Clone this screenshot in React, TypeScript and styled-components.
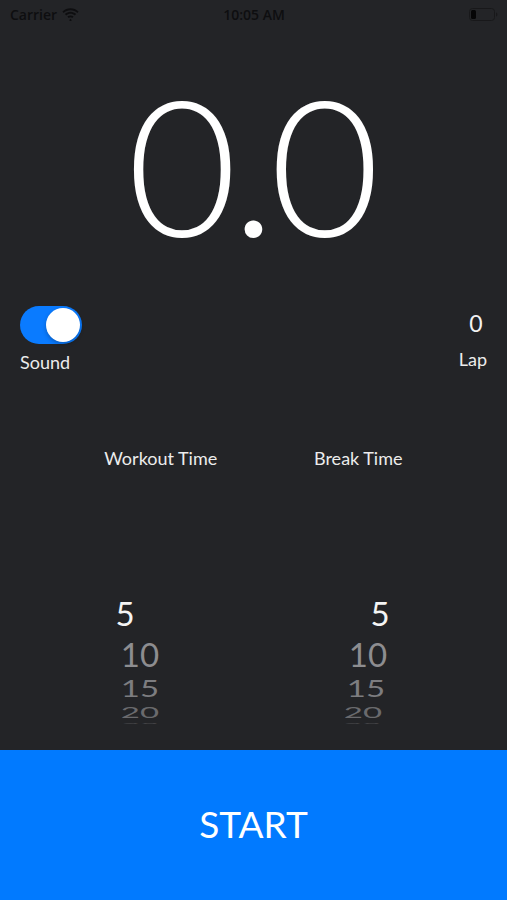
import styled, { createGlobalStyle } from "styled-components";

const GlobalStyle = createGlobalStyle`
  html, body {
    margin: 0;
    padding: 0;
    background: #232427;
  }
  * {
    box-sizing: border-box;
  }
`;

const Screen = styled.div`
  width: 507px;
  height: 900px;
  display: flex;
  flex-direction: column;
  background: #232427;
  font-family: Lato, "Open Sans", sans-serif;
  color: #fff;
  overflow: hidden;
`;

const StatusBar = styled.div`
  height: 28px;
  display: grid;
  grid-template-columns: 1fr auto 1fr;
  align-items: center;
  padding: 0 9px 0 10px;
  color: #0e0e10;
  font-family: "Open Sans", sans-serif;
  font-size: 14px;
  font-weight: 600;
`;

const StatusLeft = styled.div`
  display: flex;
  align-items: center;
  gap: 5px;
`;

const StatusRight = styled.div`
  display: flex;
  justify-content: flex-end;
  align-items: center;
`;

const Timer = styled.div`
  height: 262px;
  padding: 8px 6px 0 0;
  display: flex;
  justify-content: center;
  align-items: center;
  font-size: 190px;
  font-weight: 300;
  line-height: 1;
  letter-spacing: -6px;
`;

const ControlsRow = styled.div`
  height: 140px;
  display: flex;
  justify-content: space-between;
  align-items: flex-start;
  padding: 16px 20px 0 20px;
`;

const Control = styled.div<{ $align: "start" | "end" }>`
  display: flex;
  flex-direction: column;
  align-items: ${(p) => (p.$align === "start" ? "flex-start" : "center")};
  gap: ${(p) => (p.$align === "start" ? "7px" : "12px")};
`;

const Switch = styled.div<{ $on: boolean }>`
  width: 62px;
  height: 38px;
  border-radius: 19px;
  padding: 2px;
  display: flex;
  justify-content: ${(p) => (p.$on ? "flex-end" : "flex-start")};
  background: ${(p) => (p.$on ? "#0a7bff" : "#3a3a3c")};
`;

const Knob = styled.div`
  width: 34px;
  height: 34px;
  border-radius: 50%;
  background: #fff;
  box-shadow: 0 2px 4px rgba(0, 0, 0, 0.25);
`;

const SmallLabel = styled.div`
  font-size: 18px;
  color: #ececec;
  line-height: 22px;
`;

const LapCount = styled.div`
  font-size: 23px;
  line-height: 26px;
  color: #f2f2f2;
  padding-top: 4px;
  padding-left: 6px;
`;

const Columns = styled.div`
  display: grid;
  grid-template-columns: 1fr 1fr;
  padding: 0 50px 0 62px;
`;

const ColumnTitle = styled.div`
  text-align: center;
  font-size: 18px;
  color: #ececec;
  line-height: 24px;
  padding-top: 16px;
`;

const Pickers = styled(Columns)`
  padding: 0 25px 0 26px;
  margin-top: 122px;
`;

const Wheel = styled.div`
  display: flex;
  flex-direction: column;
  align-items: center;
`;

const WheelItem = styled.div<{
  $h: number;
  $scale: number;
  $shift: number;
  $color: string;
}>`
  height: ${(p) => p.$h}px;
  line-height: ${(p) => p.$h}px;
  font-size: 33px;
  color: ${(p) => p.$color};
  transform: translateX(${(p) => p.$shift}px) scaleY(${(p) => p.$scale});
  overflow: visible;
`;

const StartButton = styled.button`
  margin-top: auto;
  height: 150px;
  width: 100%;
  padding: 0 0 4px 0;
  border: none;
  background: #017aff;
  color: #fff;
  font-family: Lato, "Open Sans", sans-serif;
  font-size: 37px;
  font-weight: 400;
  cursor: pointer;
`;

const rows = [
  { v: "5", h: 42, scale: 1, color: "#f4f4f4" },
  { v: "10", h: 40, scale: 1, color: "#8d8d90" },
  { v: "15", h: 28, scale: 0.7, color: "#7d7d80" },
  { v: "20", h: 20, scale: 0.45, color: "#6a6a6d" },
  { v: "25", h: 2, scale: 0.07, color: "#4a4a4d" },
];

const leftShift = [-15, 0, 0, 0, 0];
const rightShift = [12, 0, -2, -5, -6];

const Wifi = () => (
  <svg width="17" height="13" viewBox="0 0 17 13">
    <path d="M8.5 2.2c2.6 0 5 1 6.8 2.7l1.3-1.4C14.4 1.4 11.6 0.2 8.5 0.2S2.6 1.4 0.4 3.5l1.3 1.4C3.5 3.2 5.9 2.2 8.5 2.2z" fill="#0e0e10" />
    <path d="M8.5 5.8c1.6 0 3.1 0.6 4.3 1.7l1.3-1.4C12.6 4.7 10.6 3.8 8.5 3.8S4.4 4.7 2.9 6.1l1.3 1.4C5.4 6.4 6.9 5.8 8.5 5.8z" fill="#0e0e10" />
    <path d="M8.5 9.3c0.7 0 1.3 0.2 1.8 0.7l1.3-1.4C10.8 7.8 9.7 7.4 8.5 7.4S6.2 7.8 5.4 8.6l1.3 1.4C7.2 9.5 7.8 9.3 8.5 9.3z M8.5 10.8l1.3 1.4-1.3 1.3-1.3-1.3z" fill="#0e0e10" />
  </svg>
);

const Battery = () => (
  <svg width="29" height="13" viewBox="0 0 29 13">
    <rect x="0.5" y="0.5" width="25" height="12" rx="3" fill="none" stroke="#18181a" strokeWidth="1" />
    <rect x="2" y="2" width="5" height="9" rx="1.5" fill="#050506" />
    <path d="M27 4.5v4c0.8-0.3 1.4-1 1.4-2s-0.6-1.7-1.4-2z" fill="#18181a" />
  </svg>
);

export default function App() {
  return (
    <>
      <GlobalStyle />
      <Screen>
        <StatusBar>
          <StatusLeft>
            Carrier
            <Wifi />
          </StatusLeft>
          <div>10:05 AM</div>
          <StatusRight>
            <Battery />
          </StatusRight>
        </StatusBar>
        <Timer>0.0</Timer>
        <ControlsRow>
          <Control $align="start">
            <Switch $on>
              <Knob />
            </Switch>
            <SmallLabel>Sound</SmallLabel>
          </Control>
          <Control $align="end">
            <LapCount>0</LapCount>
            <SmallLabel>Lap</SmallLabel>
          </Control>
        </ControlsRow>
        <Columns>
          <ColumnTitle>Workout Time</ColumnTitle>
          <ColumnTitle>Break Time</ColumnTitle>
        </Columns>
        <Pickers>
          <Wheel>
            {rows.map((r, i) => (
              <WheelItem
                key={r.v}
                $h={r.h}
                $scale={r.scale}
                $shift={leftShift[i]}
                $color={r.color}
              >
                {r.v}
              </WheelItem>
            ))}
          </Wheel>
          <Wheel>
            {rows.map((r, i) => (
              <WheelItem
                key={r.v}
                $h={r.h}
                $scale={r.scale}
                $shift={rightShift[i]}
                $color={r.color}
              >
                {r.v}
              </WheelItem>
            ))}
          </Wheel>
        </Pickers>
        <StartButton>START</StartButton>
      </Screen>
    </>
  );
}
